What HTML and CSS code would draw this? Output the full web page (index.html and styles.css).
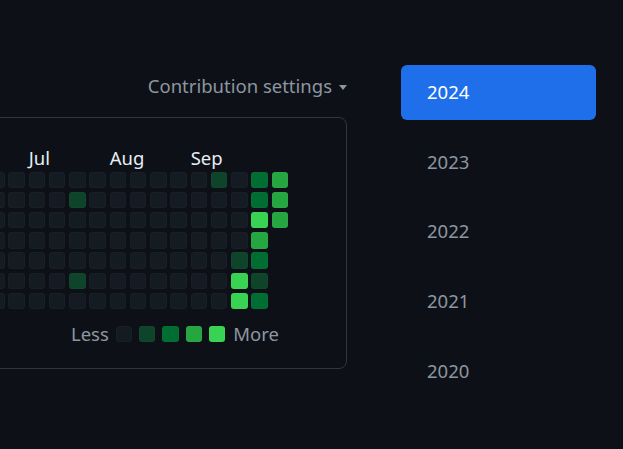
FILE: index.html
```html
<!DOCTYPE html>
<html lang="en">
<head>
<meta charset="utf-8">
<title>Contributions</title>
<link rel="stylesheet" href="styles.css">
</head>
<body>
<div class="page">
  <div class="left">
    <div class="settings">Contribution settings <span class="caret"></span></div>
    <div class="graph">
      <div class="months">
        <span class="month m-jul">Jul</span>
        <span class="month m-aug">Aug</span>
        <span class="month m-sep">Sep</span>
      </div>
      <div class="grid" id="grid"></div>
      <div class="legend">
        <span class="legend-text">Less</span>
        <span class="cell l0"></span>
        <span class="cell l1"></span>
        <span class="cell l2"></span>
        <span class="cell l3"></span>
        <span class="cell l4"></span>
        <span class="legend-text">More</span>
      </div>
    </div>
  </div>
  <ul class="years">
    <li class="year active">2024</li>
    <li class="year">2023</li>
    <li class="year">2022</li>
    <li class="year">2021</li>
    <li class="year">2020</li>
  </ul>
</div>
<script>
  var rows = 7;
  var special = {
    "0,13": 1, "0,15": 2, "0,16": 3,
    "1,6": 1, "1,15": 2, "1,16": 3,
    "2,15": 4, "2,16": 3,
    "3,15": 3,
    "4,14": 1, "4,15": 2,
    "5,6": 1, "5,14": 4, "5,15": 1,
    "6,14": 4, "6,15": 2
  };
  var grid = document.getElementById('grid');
  for (var r = 0; r < rows; r++) {
    for (var c = 1; c <= 16; c++) {
      var el = document.createElement('span');
      var key = r + ',' + c;
      if (c === 16 && r >= 3) {
        el.className = 'cell none';
      } else {
        el.className = 'cell l' + (special[key] || 0);
      }
      grid.appendChild(el);
    }
  }
</script>
</body>
</html>
```
FILE: styles.css
```css
* { box-sizing: border-box; }
html, body {
  margin: 0;
  padding: 0;
  background: #0d1117;
  overflow: hidden;
}
body {
  font-family: "Noto Sans", "Open Sans", sans-serif;
  font-size: 18.5px;
  color: #e6edf3;
  width: 623px;
  height: 449px;
}
.page {
  display: flex;
  align-items: flex-start;
}
.left {
  width: 347px;
  flex: none;
  display: flex;
  flex-direction: column;
  align-items: flex-end;
  padding-top: 74px;
}
.settings {
  height: 24px;
  line-height: 24px;
  color: #8d96a0;
  display: flex;
  align-items: center;
  gap: 7px;
  margin-bottom: 19px;
  white-space: nowrap;
}
.caret {
  width: 0;
  height: 0;
  border-left: 4.5px solid transparent;
  border-right: 4.5px solid transparent;
  border-top: 5px solid #8d96a0;
  margin-top: 2px;
}
.graph {
  width: 460px;
  flex: none;
  border: 1px solid #30363d;
  border-radius: 8px;
  padding: 28px 58px 22px 0;
  display: flex;
  flex-direction: column;
  align-items: flex-end;
}
.months, .grid {
  display: grid;
  grid-template-columns: repeat(16, 16.3px);
  column-gap: 3.96px;
}
.months {
  height: 24px;
  line-height: 24px;
  margin-bottom: 1.7px;
}
.month {
  white-space: nowrap;
  color: #e6edf3;
}
.m-jul { grid-column: 4 / span 3; }
.m-aug { grid-column: 8 / span 3; }
.m-sep { grid-column: 12 / span 3; }
.grid {
  grid-template-rows: repeat(7, 16.3px);
  row-gap: 3.9px;
}
.cell {
  display: block;
  width: 16.3px;
  height: 16.3px;
  border-radius: 3px;
  box-shadow: inset 0 0 0 1px rgba(255, 255, 255, 0.02);
}
.cell.none { background: transparent; box-shadow: none; }
.l0 { background: #151b23; }
.l1 { background: #0e4429; }
.l2 { background: #006d32; }
.l3 { background: #26a641; }
.l4 { background: #39d353; }
.legend {
  display: flex;
  align-items: center;
  gap: 7px;
  height: 24px;
  margin-top: 12.8px;
  margin-right: 9px;
}
.legend-text {
  color: #8d96a0;
  line-height: 24px;
}
.legend-text:first-child { margin-right: 0; }
.legend-text:last-child { margin-left: 1px; }
.years {
  list-style: none;
  margin: 0;
  padding: 65px 0 0 0;
  margin-left: 54px;
  width: 195px;
  display: flex;
  flex-direction: column;
  gap: 14.7px;
}
.year {
  height: 55px;
  line-height: 53px;
  padding-left: 26px;
  border-radius: 6px;
  color: #8d96a0;
}
.year.active {
  background: #1f6feb;
  color: #ffffff;
}
```
